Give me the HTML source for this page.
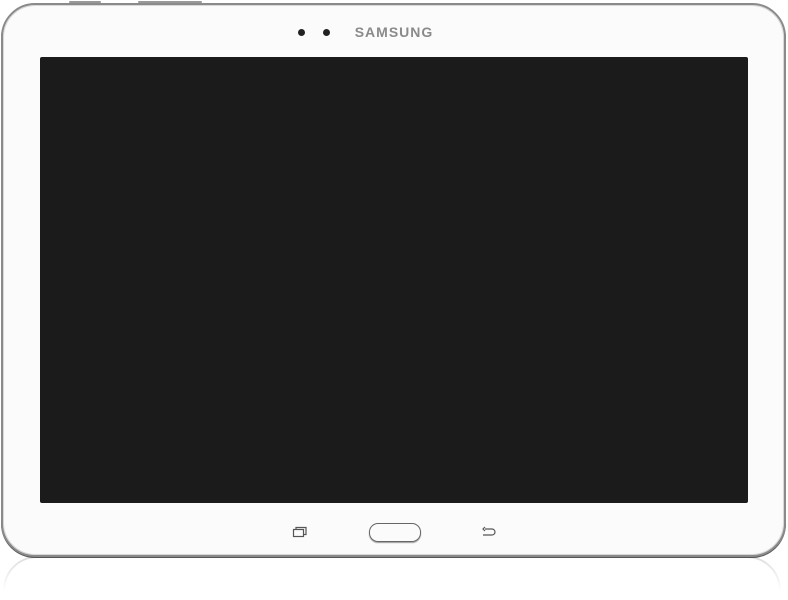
<!DOCTYPE html>
<html><head><style>
html,body{margin:0;padding:0;background:#fff;width:788px;height:600px;overflow:hidden;position:relative}
.body{position:absolute;left:1px;top:3px;width:781px;height:550px;border-radius:34px;border:2px solid #8a8a8a;box-shadow:inset 0 0 0 1px #d8d8d8,inset 0 0 0 2px #fafafa,0 1px 0 #555;background:#fbfbfb}
.btn{position:absolute;top:1px;height:2px;background:#999;border-radius:1px}
.screen{position:absolute;left:40px;top:57px;width:708px;height:446px;background:#1b1b1b;border-radius:2px}
.dot{position:absolute;width:7px;height:7px;border-radius:50%;background:#222;top:29px}
.logo{position:absolute;left:352px;top:24px;width:84px;text-align:center;font:bold 14px "Liberation Sans",sans-serif;letter-spacing:1px;color:#8a8a8a}
.home{position:absolute;left:369px;top:523px;width:50px;height:17px;border:1px solid #666;border-radius:9px;box-shadow:0 1px 1px #999}
.refl{position:absolute;left:3px;top:556px;width:778px;height:44px;border:2px solid #ddd;border-bottom:none;border-radius:34px 34px 0 0;box-sizing:border-box;-webkit-mask-image:linear-gradient(#000,transparent 80%);mask-image:linear-gradient(#000,transparent 80%)}
</style></head><body>
<div class="btn" style="left:69px;width:32px"></div>
<div class="btn" style="left:138px;width:64px"></div>
<div class="refl"></div>
<div class="body"></div>
<div class="screen"></div>
<div class="dot" style="left:298px"></div>
<div class="dot" style="left:323px"></div>
<div class="logo">SAMSUNG</div>
<div class="home"></div>
<svg style="position:absolute;left:290px;top:525px" width="18" height="14" viewBox="0 0 18 14"><rect x="3.5" y="4.5" width="10" height="7" fill="none" stroke="#555" stroke-width="1.2"/><path d="M6 4.5V2.5h10v7h-2.5" fill="none" stroke="#555" stroke-width="1.2"/></svg>
<svg style="position:absolute;left:481px;top:526px" width="16" height="12" viewBox="0 0 16 12"><path d="M4 3h7a3 3 0 0 1 0 6H2M4 1L2 3l2 2" fill="none" stroke="#555" stroke-width="1.2"/></svg>
</body></html>
